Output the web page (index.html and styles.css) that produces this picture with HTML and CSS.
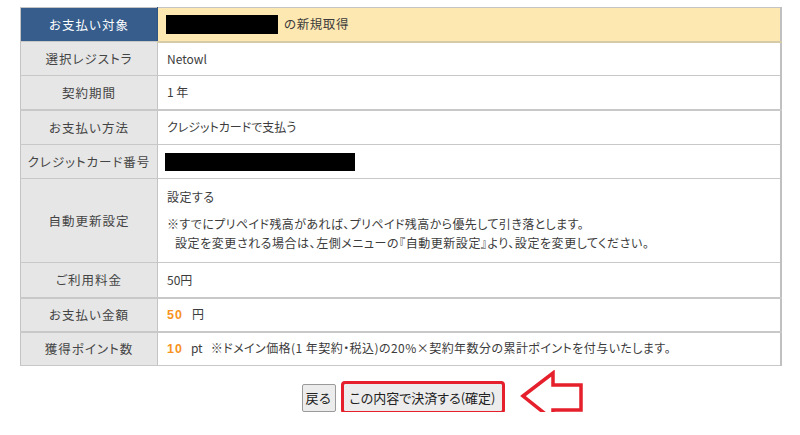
FILE: index.html
```html
<!DOCTYPE html>
<html lang="ja">
<head>
<meta charset="utf-8">
<link rel="stylesheet" href="styles.css">
</head>
<body>
<div class="page">
  <table class="confirm">
    <tr class="r-target">
      <th class="th-target">お支払い対象</th>
      <td class="td-target"><span class="redact redact-domain"></span><span class="suffix">の新規取得</span></td>
    </tr>
    <tr class="r34">
      <th>選択レジストラ</th>
      <td>Netowl</td>
    </tr>
    <tr class="r34 thick">
      <th>契約期間</th>
      <td>1 年</td>
    </tr>
    <tr class="r35">
      <th>お支払い方法</th>
      <td>クレジットカードで支払う</td>
    </tr>
    <tr class="r34">
      <th>クレジットカード番号</th>
      <td><span class="redact redact-card"></span></td>
    </tr>
    <tr class="r-auto">
      <th>自動更新設定</th>
      <td>
        <div class="auto-main">設定する</div>
        <div class="note">※すでにプリペイド残高があれば、プリペイド残高から優先して引き落とします。</div>
        <div class="note indent">設定を変更される場合は、左側メニューの『自動更新設定』より、設定を変更してください。</div>
      </td>
    </tr>
    <tr class="r35 thick">
      <th>ご利用料金</th>
      <td>50円</td>
    </tr>
    <tr class="r34 thick">
      <th>お支払い金額</th>
      <td><span class="num">50</span><span class="unit">円</span></td>
    </tr>
    <tr class="r34">
      <th>獲得ポイント数</th>
      <td><span class="num">10</span><span class="unit pt">pt</span><span class="pnote">※ドメイン価格(1 年契約・税込)の20%×契約年数分の累計ポイントを付与いたします。</span></td>
    </tr>
  </table>

  <div class="actions">
    <button class="btn back">戻る</button>
    <button class="btn submit">この内容で決済する(確定)</button>
    <svg class="arrow" width="66" height="54" viewBox="0 0 66 54">
      <polygon points="4,26 34,3 34,15 62,15 62,40 34,40 34,50" fill="#fff" stroke="#e51f2b" stroke-width="3.5" stroke-linejoin="miter"/>
    </svg>
  </div>
</div>
</body>
</html>
```

FILE: styles.css
```css
html, body {
  margin: 0;
  padding: 0;
  background: #fff;
}

body {
  font-family: "Noto Sans CJK JP", "Liberation Sans", sans-serif;
  color: #333;
}

.page {
  padding: 7px 18px 0 20px;
  width: 762px;
}

.confirm {
  width: 762px;
  border-collapse: collapse;
  table-layout: fixed;
  border: 1px solid #c4c4c4;
  border-right: 2px solid #c0c0c0;
}

.confirm th,
.confirm td {
  border-bottom: 1px solid #c8c8c8;
  padding: 0;
  vertical-align: middle;
}

.confirm th {
  width: 136px;
  background: #e6e6e6;
  border-right: 1px solid #c4c4c4;
  font-weight: normal;
  font-size: 12.5px;
  text-align: center;
  color: #444;
  letter-spacing: 1px;
  font-feature-settings: "palt";
}

.confirm td {
  background: #fff;
  font-size: 12px;
  padding-left: 9px;
  color: #3c3c3c;
  font-feature-settings: "palt";
  line-height: 16px;
}

.confirm tr.thick th,
.confirm tr.thick td {
  border-bottom: 2px solid #c8c8c8;
}

.r-target { height: 34px; }
.r34 { height: 34px; }
.r35 { height: 35px; }
.r-auto { height: 84px; }

.confirm th.th-target {
  background: #365d8c;
  color: #fff;
  border-right: 1px solid #2f5383;
}

.confirm td.td-target {
  background: #fee8b1;
  border-bottom: 2px solid #d6cba8;
}

.redact {
  display: inline-block;
  background: #000;
  vertical-align: middle;
}

.redact-domain {
  width: 112px;
  height: 19px;
  margin-left: -1px;
}

.redact-card {
  width: 190px;
  height: 18px;
  margin-left: -2px;
}

.suffix {
  margin-left: 6px;
  vertical-align: middle;
  font-size: 12.5px;
  letter-spacing: 0.6px;
}

.auto-main {
  margin-bottom: 9px;
  letter-spacing: 0.5px;
}

.note {
  line-height: 19px;
  letter-spacing: 0.4px;
}

.note.indent {
  padding-left: 8px;
  letter-spacing: 0.55px;
}

.num {
  color: #f7931e;
  font-weight: bold;
  font-family: "Liberation Sans", sans-serif;
  font-size: 12.5px;
  letter-spacing: 1px;
}

.unit {
  margin-left: 9px;
}

.unit.pt {
  margin-left: 8px;
}

.pnote {
  margin-left: 8px;
  letter-spacing: 0.45px;
}

.actions {
  position: relative;
  display: flex;
  justify-content: center;
  align-items: center;
  gap: 7px;
  padding-top: 17px;
  padding-left: 2px;
}

.btn {
  font-family: "Noto Sans CJK JP", "Liberation Sans", sans-serif;
  font-size: 13px;
  color: #222;
  background: #ececec;
  border: 1px solid #9a9a9a;
  border-radius: 2px;
  padding: 0 3px;
  height: 28px;
  line-height: 26px;
}

.btn.back {
  width: 34px;
  padding: 0;
}

.btn.submit {
  outline: 3px solid #e51f2b;
  outline-offset: -1px;
  border: 1px solid #9a9a9a;
  width: 160px;
  height: 29px;
  padding: 0;
  font-feature-settings: "palt";
}

.arrow {
  position: absolute;
  left: 499px;
  top: 4px;
}
```
